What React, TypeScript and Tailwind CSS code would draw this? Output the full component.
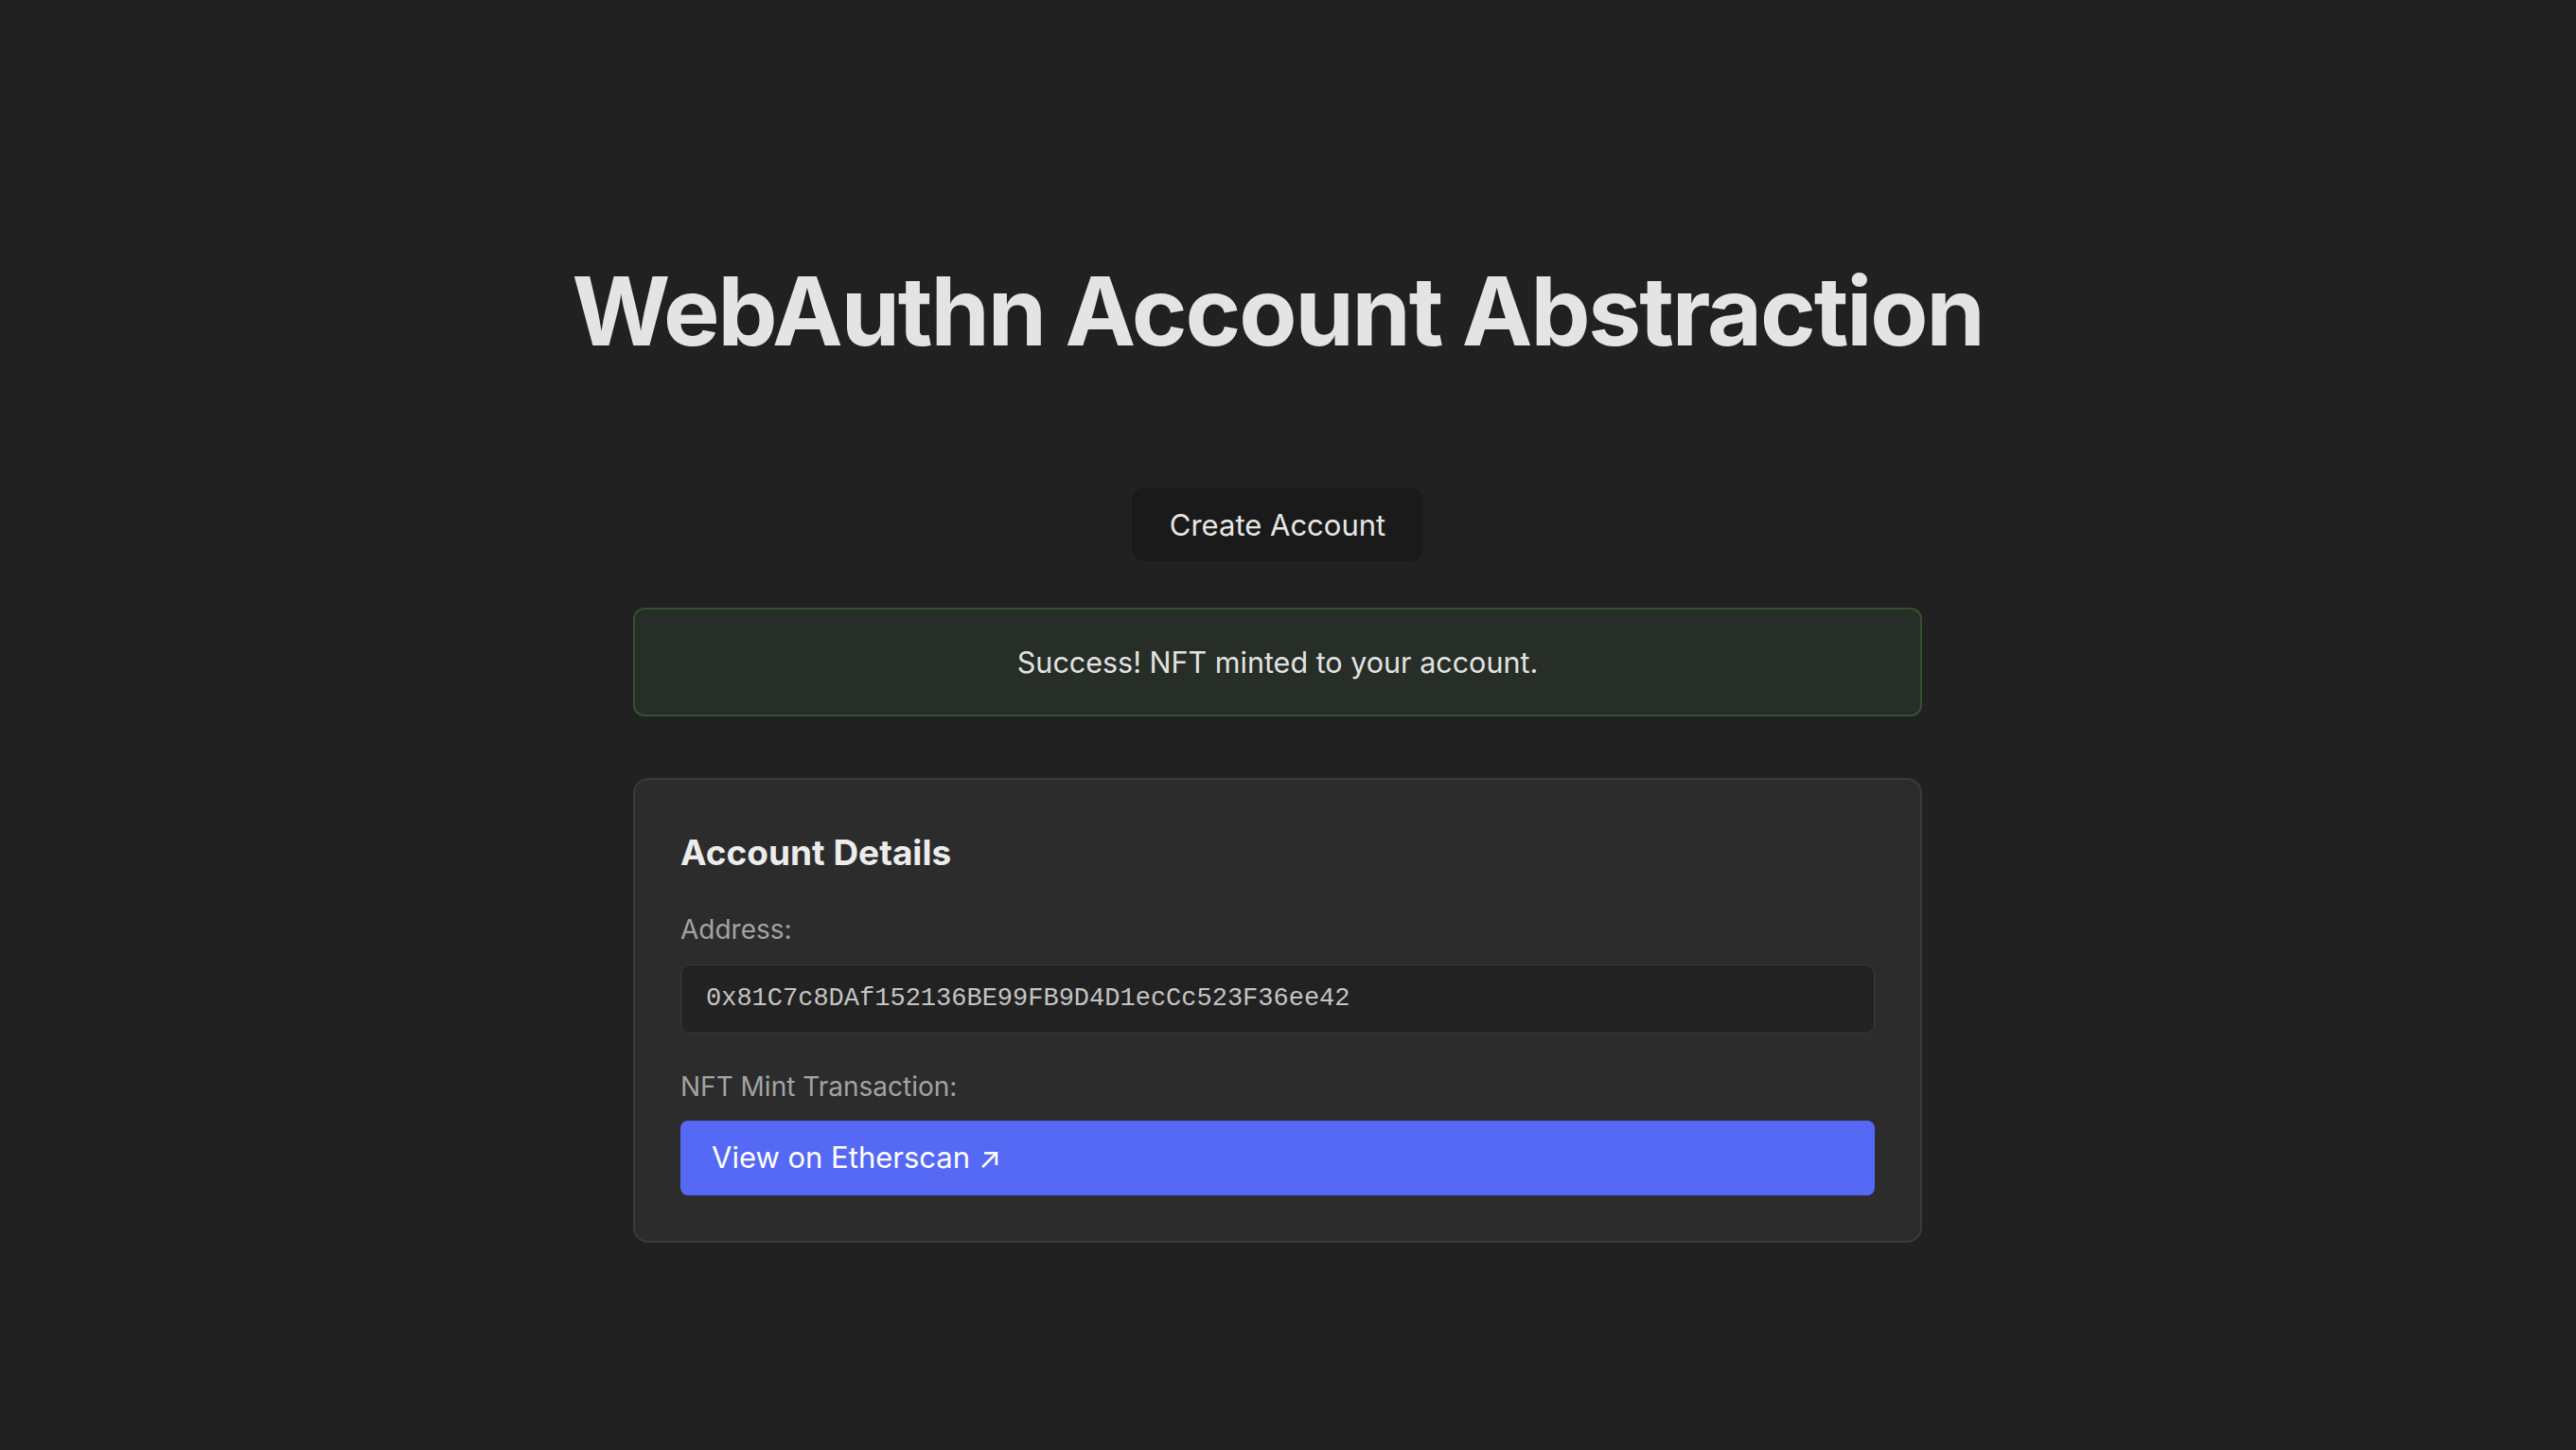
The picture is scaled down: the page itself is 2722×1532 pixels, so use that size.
import React from 'react';

const App: React.FC = () => {
  return (
    <div className="min-h-screen w-full bg-[#212121] text-[#e3e3e3] font-['Inter',sans-serif]">
      <div className="flex flex-col items-center pt-[274px] pb-20 pr-[22px]">
        <h1 className="text-[100px] leading-[110px] font-bold tracking-[-2.1px] text-[#e4e4e4]">
          WebAuthn Account Abstraction
        </h1>

        <button className="mt-[131px] h-[78px] px-[40px] rounded-[14px] bg-[#1a1a1a] text-[31px] leading-none text-[#e6e6e6]">
          Create Account
        </button>

        <div className="mt-[49px] w-[1362px] h-[115px] flex items-center justify-center rounded-[12px] border-2 border-[#35502f] bg-[#272d27] text-[30.5px] text-[#e2e2e2]">
          Success! NFT minted to your account.
        </div>

        <div className="mt-[65px] w-[1362px] rounded-[16px] border-2 border-[#3b3b3b] bg-[#2c2c2c] px-[48px] pt-[55px] pb-[48px]">
          <h2 className="text-[37px] leading-[44px] font-bold text-[#ececec]">Account Details</h2>

          <div className="mt-[42px] text-[28px] leading-[34px] text-[#a3a3a3]">Address:</div>
          <div className="mt-[20px] h-[73px] flex items-center rounded-[10px] border border-[#3a3a3a] bg-[#222222] px-[26px]">
            <span className="font-['Liberation_Mono',monospace] text-[27px] text-[#c4c4c4]">
              0x81C7c8DAf152136BE99FB9D4D1ecCc523F36ee42
            </span>
          </div>

          <div className="mt-[39px] text-[28px] leading-[34px] text-[#a3a3a3]">NFT Mint Transaction:</div>
          <a
            href="#"
            className="mt-[19px] h-[79px] flex items-center rounded-[8px] bg-[#5569f5] px-[33px] text-[31px] text-white"
          >
            View on Etherscan ↗
          </a>
        </div>
      </div>
    </div>
  );
};

export default App;
